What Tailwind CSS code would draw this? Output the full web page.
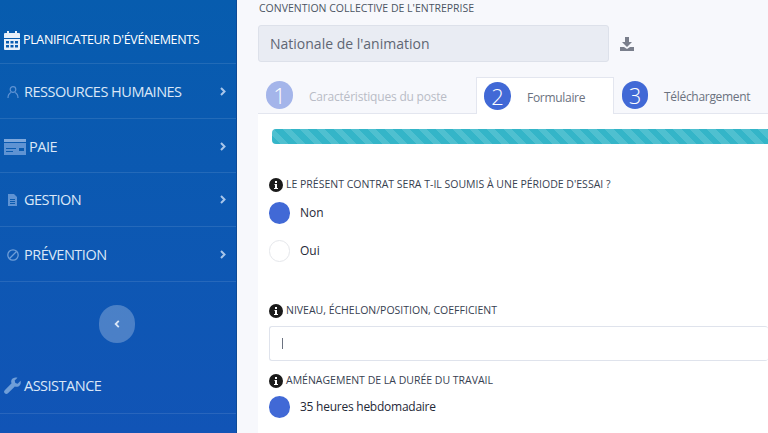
<!DOCTYPE html>
<html lang="fr">
<head>
    <meta charset="UTF-8">
    <title>Formulaire</title>
    <script src="https://cdn.jsdelivr.net/npm/@tailwindcss/browser@4"></script>
</head>
<body class="h-[433px] w-[768px] overflow-hidden bg-[#f7f8fc] font-['Open_Sans',sans-serif]">
<div class="flex h-[433px] w-[768px] overflow-hidden">
    <!-- menu -->
    <aside class="flex h-full w-[237px] shrink-0 flex-col border-r border-[#0d4a96] bg-gradient-to-b from-[#075cae] to-[#1154b6] text-[#dbe7f7]">
        <div class="flex h-[64px] items-center gap-[3px] border-b border-white/10 pl-[4px] pt-[18px] text-[12.5px] tracking-[-0.35px] text-white">
            <svg class="mb-[1px] h-[19px] w-[16px]" viewBox="0 0 16 19" fill="#e8f0fa"><path d="M3 0h2v2h6V0h2v2h2a1 1 0 0 1 1 1v4H0V3a1 1 0 0 1 1-1h2zM0 8h16v10a1 1 0 0 1-1 1H1a1 1 0 0 1-1-1z"/><path fill="#0a5cb0" d="M2 10h3v2.500H2zm4.500 0h3v2.500h-3zm4.500 0h3v2.500h-3zM2 14h3v2.500H2zm4.500 0h3v2.500h-3zm4.500 0h3v2.500h-3z"/></svg>
            <span>PLANIFICATEUR D'ÉVÉNEMENTS</span>
        </div>
        <div class="flex h-[55px] items-center border-b border-white/10 pl-[7px] pr-[10px] pt-[1px] text-[14.500px] tracking-[-0.5px]">
            <svg class="mr-[5px] h-[12px] w-[12px]" viewBox="0 0 12 12" fill="none" stroke="#5f93d3" stroke-width="1.200"><circle cx="6" cy="3.500" r="2.800"/><path d="M1 12c0-3 2-5 3-5.500M11 12c0-3-2-5-3-5.500"/></svg>
            <span>RESSOURCES HUMAINES</span>
            <svg class="ml-auto h-[9px] w-[6px]" viewBox="0 0 6 9" fill="none" stroke="#a9c6ea" stroke-width="2"><path d="M1 1l3.500 3.500L1 8"/></svg>
        </div>
        <div class="flex h-[54px] items-center border-b border-white/10 pl-[4px] pr-[10px] pt-[2px] text-[14.500px] tracking-[-0.5px]">
            <svg class="mr-[3px] h-[16px] w-[22px]" viewBox="0 0 22 16"><path fill="#7fa8dc" d="M0 0h22v3H0z"/><path fill="#5f93d3" d="M0 4h22v12H0z"/><path fill="#0a5bb0" d="M2 9h10v1H2zm13 0h5v3h-5zM2 12h7v1H2z"/></svg>
            <span>PAIE</span>
            <svg class="ml-auto h-[9px] w-[6px]" viewBox="0 0 6 9" fill="none" stroke="#a9c6ea" stroke-width="2"><path d="M1 1l3.500 3.500L1 8"/></svg>
        </div>
        <div class="flex h-[54px] items-center border-b border-white/10 pl-[8px] pr-[10px] text-[14.500px] tracking-[-0.5px]">
            <svg class="mr-[7px] h-[12px] w-[9px]" viewBox="0 0 9 12" fill="#5f93d3"><path d="M0 0h6l3 3v9H0z"/><path fill="#0a5bb0" d="M2 5h5v1H2zm0 2h5v1H2zm0 2h5v1H2z"/></svg>
            <span>GESTION</span>
            <svg class="ml-auto h-[9px] w-[6px]" viewBox="0 0 6 9" fill="none" stroke="#a9c6ea" stroke-width="2"><path d="M1 1l3.500 3.500L1 8"/></svg>
        </div>
        <div class="flex h-[55px] items-center border-b border-white/10 pl-[7px] pr-[10px] pt-[1px] text-[14.500px] tracking-[-0.5px]">
            <svg class="mr-[5px] h-[12px] w-[12px]" viewBox="0 0 12 12" fill="none" stroke="#6f9ed8" stroke-width="1.300"><circle cx="6" cy="6" r="5.200"/><path d="M2.500 9.500l7-7"/></svg>
            <span>PRÉVENTION</span>
            <svg class="ml-auto h-[9px] w-[6px]" viewBox="0 0 6 9" fill="none" stroke="#a9c6ea" stroke-width="2"><path d="M1 1l3.500 3.500L1 8"/></svg>
        </div>
        <div class="flex h-[80px] items-center justify-center pb-[1px] pr-[2px] pt-[4px]">
            <div class="flex h-[38px] w-[36px] items-center justify-center rounded-full bg-white/25">
                <svg class="h-[8px] w-[6px]" viewBox="0 0 6 9" fill="none" stroke="#dbe7f7" stroke-width="2"><path d="M5 1L1.500 4.500 5 8"/></svg>
            </div>
        </div>
        <div class="flex h-[52px] items-center border-b border-white/10 pb-[3px] pl-[4px] text-[14.500px] tracking-[-0.5px]">
            <svg class="mr-[3px] h-[18px] w-[17px]" viewBox="0 0 18 18" fill="#6f9ed8"><path d="M17.500 3.500l-3 3-2.500-.8-.7-2.500 3-3C11.500-.6 9 .4 8 2.400c-.6 1.300-.5 2.700 0 3.800L.8 13.400c-1 1-1 2.400 0 3.400s2.400 1 3.400 0l7.300-7.300c1.200.5 2.600.5 3.800-.1 2-1 3-3.500 2.200-5.900z"/></svg>
            <span>ASSISTANCE</span>
        </div>
    </aside>

    <!-- contenu -->
    <main class="min-w-0 flex-1 pl-[21px]">
        <div class="w-[600px]">
            <p class="h-[25px] pl-[1px] pt-[1px] text-[10.500px] leading-[15px] text-[#4b5563]">CONVENTION COLLECTIVE DE L'ENTREPRISE</p>
            <div class="flex items-center">
                <div class="flex h-[37px] w-[351px] items-center rounded-[3px] border border-[#dde1ea] bg-[#e9ecf3] pl-[11px] text-[14px] text-[#5f6673]">Nationale de l'animation</div>
                <svg class="ml-[11px] h-[14px] w-[14px]" viewBox="0 0 14 14" fill="#7a7f8c"><path d="M5 0h4v5h3L7 10 2 5h3zM0 10h4l3 2 3-2h4v4H0z"/></svg>
            </div>
        </div>
        <!-- onglets -->
        <div class="mt-[15px] flex h-[37px] w-[520px] border-b border-[#e3e6ef]">
            <div class="flex w-[218px] items-center pl-[8px]">
                <span class="flex h-[28px] w-[27px] items-center justify-center rounded-full bg-[#a4b5ea] pt-[1px] text-[22px] font-light text-white">1</span>
                <span class="ml-[16px] pt-[3px] text-[12px] tracking-[-0.2px] text-[#b9bcc6]">Caractéristiques du poste</span>
            </div>
            <div class="flex h-[37px] w-[138px] items-center border border-b-0 border-[#e3e6ef] bg-white pl-[7px]">
                <span class="flex h-[28px] w-[27px] items-center justify-center rounded-full bg-[#4169d6] pt-[1px] text-[22px] font-light text-white">2</span>
                <span class="ml-[16px] pt-[3px] text-[12px] tracking-[-0.3px] text-[#6b7280]">Formulaire</span>
            </div>
            <div class="flex items-center pl-[8px]">
                <span class="flex h-[28px] w-[26px] items-center justify-center rounded-full bg-[#4169d6] pt-[1px] text-[22px] font-light text-white">3</span>
                <span class="ml-[16px] pt-[3px] text-[12px] tracking-[-0.3px] text-[#6b7280]">Téléchargement</span>
            </div>
        </div>
        <!-- formulaire -->
        <div class="h-[320px] bg-white pl-[11px] pt-[15px]">
            <div class="ml-[3px] h-[15px] rounded-l-[4px] bg-[repeating-linear-gradient(45deg,#34b5c8_0,#34b5c8_6px,#4fc0d0_6px,#4fc0d0_12px)]"></div>
            <div class="mt-[32px] flex h-[18px] items-center gap-[3px] text-[10.500px] text-[#374151]">
                <svg class="h-[14px] w-[14px]" viewBox="0 0 14 14"><circle cx="7" cy="7" r="7" fill="#1a1a1a"/><path fill="#fff" d="M6 3h2v2H6zM5.500 6H8v4h1v1H5v-1h1V7h-.5z"/></svg>
                <span>LE PRÉSENT CONTRAT SERA T-IL SOUMIS À UNE PÉRIODE D'ESSAI ?</span>
            </div>
            <div class="mt-[8px] flex h-[22px] items-center text-[12px] text-[#1f2937]">
                <span class="h-[22px] w-[21px] rounded-full bg-[#4169d6]"></span><span class="ml-[10px]">Non</span>
            </div>
            <div class="mt-[16px] flex h-[22px] items-center text-[12px] text-[#1f2937]">
                <span class="h-[22px] w-[21px] rounded-full border border-[#e5e7eb] bg-white"></span><span class="ml-[10px]">Oui</span>
            </div>
            <div class="mt-[40px] flex h-[18px] items-center gap-[3px] text-[10.500px] text-[#374151]">
                <svg class="h-[14px] w-[14px]" viewBox="0 0 14 14"><circle cx="7" cy="7" r="7" fill="#1a1a1a"/><path fill="#fff" d="M6 3h2v2H6zM5.500 6H8v4h1v1H5v-1h1V7h-.5z"/></svg>
                <span>NIVEAU, ÉCHELON/POSITION, COEFFICIENT</span>
            </div>
            <div class="mt-[6px] flex h-[35px] items-center rounded-[3px] border border-r-0 border-[#dfe3ec] pl-[12px] text-[13px] leading-none text-[#6b7280]"><span class="h-[11px] w-[1px] bg-[#6b7280]"></span></div>
            <div class="mt-[11px] flex h-[18px] items-center gap-[3px] text-[10.500px] text-[#374151]">
                <svg class="h-[14px] w-[14px]" viewBox="0 0 14 14"><circle cx="7" cy="7" r="7" fill="#1a1a1a"/><path fill="#fff" d="M6 3h2v2H6zM5.500 6H8v4h1v1H5v-1h1V7h-.5z"/></svg>
                <span>AMÉNAGEMENT DE LA DURÉE DU TRAVAIL</span>
            </div>
            <div class="mt-[6px] flex h-[22px] items-center text-[12px] tracking-[-0.25px] text-[#1f2937]">
                <span class="h-[22px] w-[21px] rounded-full bg-[#4169d6]"></span><span class="ml-[10px]">35 heures hebdomadaire</span>
            </div>
        </div>
    </main>
</div>
</body>
</html>
